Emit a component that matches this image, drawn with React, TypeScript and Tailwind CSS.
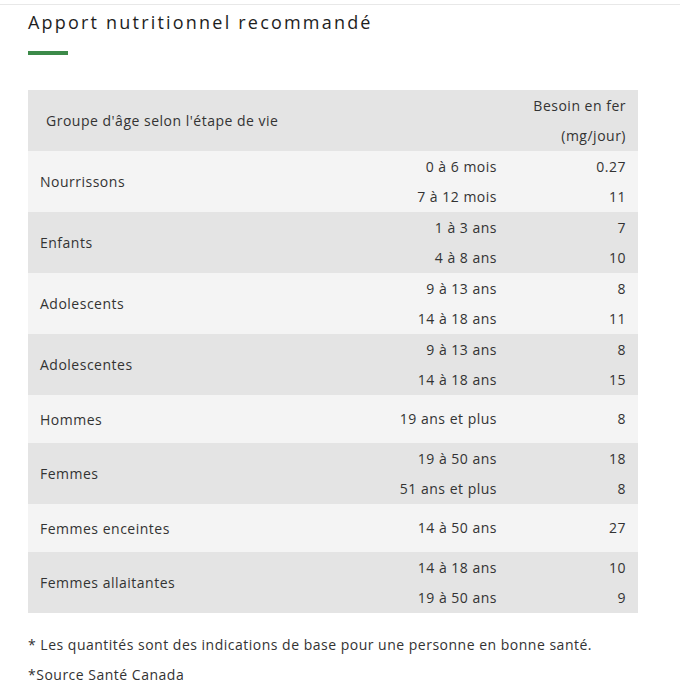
const rows = [
  { group: "Nourrissons", items: [["0 à 6 mois", "0.27"], ["7 à 12 mois", "11"]] },
  { group: "Enfants", items: [["1 à 3 ans", "7"], ["4 à 8 ans", "10"]] },
  { group: "Adolescents", items: [["9 à 13 ans", "8"], ["14 à 18 ans", "11"]] },
  { group: "Adolescentes", items: [["9 à 13 ans", "8"], ["14 à 18 ans", "15"]] },
  { group: "Hommes", items: [["19 ans et plus", "8"]] },
  { group: "Femmes", items: [["19 à 50 ans", "18"], ["51 ans et plus", "8"]] },
  { group: "Femmes enceintes", items: [["14 à 50 ans", "27"]] },
  { group: "Femmes allaitantes", items: [["14 à 18 ans", "10"], ["19 à 50 ans", "9"]] },
];

export default function App() {
  return (
    <div className="min-h-[693px] bg-white text-[#333] font-['Open_Sans',sans-serif]">
      <div className="pt-1">
        <div className="h-px bg-[#e8e8e8]" />
      </div>
      <div className="px-7">
        <h2 className="mt-[6px] text-[18px] leading-[22px] tracking-[2.2px] text-[#1e1e1e]">
          Apport nutritionnel recommandé
        </h2>
        <div className="mt-[18px] h-1 w-10 bg-[#3c8a49]" />

        <div className="mt-[35px] w-[610px] text-[14px] tracking-[0.5px]">
          <div className="grid h-[61px] grid-cols-[1fr_180px_129px] bg-[#e4e4e4]">
            <div className="flex items-center pl-[18px]">Groupe d'âge selon l'étape de vie</div>
            <div />
            <div className="flex flex-col justify-center pr-3 text-right leading-[30px]">
              <span>Besoin en fer</span>
              <span>(mg/jour)</span>
            </div>
          </div>

          {rows.map((row, i) => (
            <div
              key={row.group}
              className={`grid grid-cols-[1fr_180px_129px] ${
                row.items.length > 1 ? "h-[61px]" : "h-12"
              } ${i % 2 === 0 ? "bg-[#f4f4f4]" : "bg-[#e4e4e4]"}`}
            >
              <div className="flex items-center pl-3">{row.group}</div>
              <div className="flex flex-col justify-center pr-3 text-right">
                {row.items.map(([age]) => (
                  <span key={age} className="leading-[30px]">{age}</span>
                ))}
              </div>
              <div className="flex flex-col justify-center pr-3 text-right">
                {row.items.map(([age, val]) => (
                  <span key={age} className="leading-[30px]">{val}</span>
                ))}
              </div>
            </div>
          ))}
        </div>

        <p className="mt-[17px] text-[14px] leading-[30px] tracking-[0.5px]">
          * Les quantités sont des indications de base pour une personne en bonne santé.
        </p>
        <p className="text-[14px] leading-[30px] tracking-[0.5px]">*Source Santé Canada</p>
      </div>
    </div>
  );
}
